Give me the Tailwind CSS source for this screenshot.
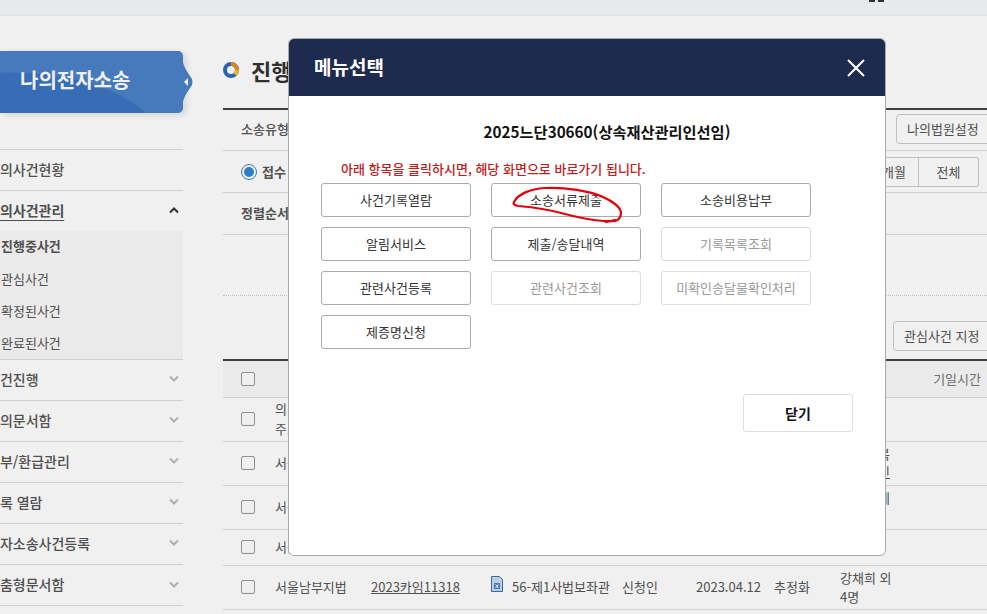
<!doctype html>
<html lang="ko">
<head>
<meta charset="utf-8">
<meta name="viewport" content="width=device-width,initial-scale=1">
<title>나의전자소송</title>
<script src="https://cdn.jsdelivr.net/npm/@tailwindcss/browser@4"></script>
</head>
<body class="bg-white">
<div class="relative w-[987px] h-[614px] overflow-hidden bg-white text-[13px] text-[#555] font-['Noto_Sans_CJK_KR','Noto_Sans',sans-serif]">

  <!-- 상단 바 -->
  <div class="h-[16px] bg-[#f7f8f9] border-b border-[#ececec] flex justify-end items-start overflow-hidden">
    <div class="flex gap-[45px] pr-[14px] text-[12px] leading-[18px] text-[#444]">
      <span class="flex gap-[3px] h-[2px]"><span class="w-[6px] bg-[#333]"></span><span class="w-[6px] bg-[#333]"></span></span>
      <span class="mt-[-15px]">로그아웃</span>
    </div>
  </div>

  <div class="flex">
    <!-- 왼쪽 메뉴 -->
    <aside class="w-[183px] shrink-0 pt-[35px]">
      <div class="relative h-[62px] rounded-r-[5px] bg-[#4c82c8] flex items-center pl-[20px] pb-[4px] text-[20px] font-bold text-white shadow-[3px_2px_6px_rgba(0,0,0,.12)]">
        <svg class="absolute left-0 top-0 rounded-r-[5px]" width="183" height="62" viewBox="0 0 183 62"><path d="M0 22C50 20 110 30 146 62H0Z" fill="#3a74c0"/></svg>
        <span class="relative">나의전자소송</span>
        <svg class="absolute left-[182px] top-[6px]" width="12" height="50" viewBox="0 0 12 50">
          <path d="M0 0C1 9 4 13 10 22Q11 25 10 28C4 37 1 41 0 50Z" fill="#4c82c8"/>
          <path d="M6 21V29L2 25Z" fill="#fff"/>
        </svg>
      </div>

      <ul class="mt-[36px] border-t border-[#ddd] text-[14px] font-medium">
        <li class="h-[41px] flex items-center pb-[2px] border-b border-[#ddd] overflow-hidden"><span class="ml-[-13px] whitespace-nowrap">나의사건현황</span></li>
        <li class="h-[40px] flex items-center justify-between pr-[3px] pb-[2px] overflow-hidden">
          <span class="ml-[-13px] whitespace-nowrap font-bold underline underline-offset-4">나의사건관리</span>
          <svg width="12" height="8" viewBox="0 0 12 8" fill="none" stroke="#333" stroke-width="2"><path d="M2 6.5 6 2.5l4 4"/></svg>
        </li>
        <li class="h-[129px] bg-[#f9f9f9] border-b border-[#ddd] text-[13px] font-normal flex flex-col">
          <a class="h-[32px] flex items-center pl-px pb-[2px] font-bold">진행중사건</a>
          <a class="h-[32px] flex items-center pl-px">관심사건</a>
          <a class="h-[32px] flex items-center pl-px">확정된사건</a>
          <a class="h-[32px] flex items-center pl-px">완료된사건</a>
        </li>
        <li class="h-[41px] flex items-center justify-between pr-[3px] pb-[2px] border-b border-[#ddd] overflow-hidden"><span class="ml-[-13px] whitespace-nowrap">사건진행</span><svg width="12" height="8" viewBox="0 0 12 8" fill="none" stroke="#bbb" stroke-width="2"><path d="m2 1.5 4 4 4-4"/></svg></li>
        <li class="h-[41px] flex items-center justify-between pr-[3px] pb-[2px] border-b border-[#ddd] overflow-hidden"><span class="ml-[-13px] whitespace-nowrap">나의문서함</span><svg width="12" height="8" viewBox="0 0 12 8" fill="none" stroke="#bbb" stroke-width="2"><path d="m2 1.5 4 4 4-4"/></svg></li>
        <li class="h-[41px] flex items-center justify-between pr-[3px] pb-[2px] border-b border-[#ddd] overflow-hidden"><span class="ml-[-13px] whitespace-nowrap">납부/환급관리</span><svg width="12" height="8" viewBox="0 0 12 8" fill="none" stroke="#bbb" stroke-width="2"><path d="m2 1.5 4 4 4-4"/></svg></li>
        <li class="h-[41px] flex items-center justify-between pr-[3px] pb-[2px] border-b border-[#ddd] overflow-hidden"><span class="ml-[-13px] whitespace-nowrap">기록 열람</span><svg width="12" height="8" viewBox="0 0 12 8" fill="none" stroke="#bbb" stroke-width="2"><path d="m2 1.5 4 4 4-4"/></svg></li>
        <li class="h-[41px] flex items-center justify-between pr-[3px] pb-[2px] border-b border-[#ddd] overflow-hidden"><span class="ml-[-13px] whitespace-nowrap">전자소송사건등록</span><svg width="12" height="8" viewBox="0 0 12 8" fill="none" stroke="#bbb" stroke-width="2"><path d="m2 1.5 4 4 4-4"/></svg></li>
        <li class="h-[41px] flex items-center justify-between pr-[3px] pb-[1px] border-b border-[#ddd] overflow-hidden"><span class="ml-[-13px] whitespace-nowrap">맞춤형문서함</span><svg width="12" height="8" viewBox="0 0 12 8" fill="none" stroke="#bbb" stroke-width="2"><path d="m2 1.5 4 4 4-4"/></svg></li>
      </ul>
    </aside>

    <!-- 본문 -->
    <main class="ml-[40px] flex-1 min-w-0">
      <div class="h-[92px] flex items-center gap-[12px] pt-[16px]">
        <svg width="16" height="16" viewBox="0 0 16 16" fill="none" stroke-width="4">
          <circle cx="8" cy="8" r="6" stroke="#2a6db8"/>
          <path d="M8 2a6 6 0 0 1 6 6" stroke="#f08a24"/>
          <path d="M14 8a6 6 0 0 1-2 4.5" stroke="#f3c42c"/>
        </svg>
        <h1 class="text-[22px] font-bold text-[#333]">진행중사건</h1>
      </div>

      <div class="border-t-2 border-[#444]">
        <div class="h-[41px] flex items-center justify-between border-b border-[#ddd] pl-[18px]">
          <span class="font-medium pb-[3px]">소송유형</span>
          <button class="h-[30px] w-[100px] mr-[-9px] mb-[2px] shrink-0 border border-[#ccc] rounded-[4px] text-left pl-[10px] whitespace-nowrap">나의법원설정</button>
        </div>
        <div class="h-[42px] flex items-center justify-between border-b border-[#ddd] pl-[18px] pr-[8px]">
          <span class="flex items-center gap-[5px] font-bold">
            <span class="w-[16px] h-[16px] rounded-full border border-[#3a86c8] flex items-center justify-center"><span class="w-[10px] h-[10px] rounded-full bg-[#2f86d6]"></span></span>
            접수
          </span>
          <div class="flex h-[30px] border border-[#ccc] rounded-[3px]">
            <span class="w-[60px] flex items-center justify-end pr-[12px] border-r border-[#ccc]">1개월</span>
            <span class="w-[59px] flex items-center justify-center">전체</span>
          </div>
        </div>
        <div class="h-[42px] flex items-center border-b border-[#ddd] pl-[18px] pb-[2px] font-bold">정렬순서</div>
      </div>

      <div class="h-[61px] border-b border-dotted border-[#ccc]"></div>

      <div class="h-[64px] flex items-start justify-end pt-[25px] overflow-visible">
        <button class="h-[30px] w-[100px] mr-[-6px] shrink-0 border border-[#ccc] rounded-[4px] text-left pl-[10px] whitespace-nowrap">관심사건 지정</button>
      </div>

      <div class="border-t-2 border-[#444] mt-[-1px]">
        <div class="h-[37px] bg-[#f9f9f9] border-b border-[#ddd] flex items-center justify-between pl-[18px] pr-[6px]">
          <span class="w-[14px] h-[14px] border border-[#999] rounded-[2px] bg-white"></span>
          <span class="text-[#777]">기일시간</span>
        </div>
        <div class="h-[44px] pb-[2px] border-b border-[#ddd] grid grid-cols-[34px_96px_120px_131px_74px_78px_66px_1fr] items-center pl-[18px]">
          <span class="w-[14px] h-[14px] border border-[#999] rounded-[2px]"></span>
          <span class="leading-[20px]">의정부<br>주소</span>
        </div>
        <div class="h-[44px] pb-[2px] border-b border-[#ddd] grid grid-cols-[34px_96px_120px_131px_74px_78px_66px_1fr] items-center pl-[18px]">
          <span class="w-[14px] h-[14px] border border-[#999] rounded-[2px]"></span>
          <span>서울</span><span></span><span></span><span></span><span></span><span></span>
          <span class="w-[50px] text-right leading-[18px] whitespace-nowrap">강지복<br><u>외 1인</u></span>
        </div>
        <div class="h-[44px] pb-[2px] border-b border-[#ddd] grid grid-cols-[34px_96px_120px_131px_74px_78px_66px_1fr] items-center pl-[18px]">
          <span class="w-[14px] h-[14px] border border-[#999] rounded-[2px]"></span>
          <span>서울</span><span></span><span></span><span></span><span></span><span></span>
          <span class="w-[50px] text-right leading-[18px] whitespace-nowrap pb-[18px]">강지에</span>
        </div>
        <div class="h-[36px] pb-[2px] border-b border-[#ddd] grid grid-cols-[34px_96px_120px_131px_74px_78px_66px_1fr] items-center pl-[18px]">
          <span class="w-[14px] h-[14px] border border-[#999] rounded-[2px]"></span>
          <span>서울</span>
        </div>
        <div class="h-[44px] pb-[2px] border-b border-[#ddd] grid grid-cols-[34px_96px_120px_131px_74px_78px_66px_1fr] items-center pl-[18px] whitespace-nowrap">
          <span class="w-[14px] h-[14px] border border-[#999] rounded-[2px]"></span>
          <span>서울남부지법</span>
          <u>2023카임11318</u>
          <span class="flex items-center gap-[9px]">
            <svg class="mb-[5px]" width="12" height="16" viewBox="0 0 12 16"><path d="M.5.5h8l3 3v12H.5z" fill="#c9daf2" stroke="#3d6fb0"/><path d="M3 7h6v6H3z" fill="#4a7fc4"/><path d="M4.5 8.5 7.5 12M7.5 8.5 4.5 12" stroke="#fff"/></svg>
            56-제1사법보좌관
          </span>
          <span>신청인</span>
          <span>2023.04.12</span>
          <span>추정화</span>
          <span class="leading-[19px] whitespace-normal">강채희 외<br>4명</span>
        </div>
      </div>
    </main>
  </div>

  <!-- 딤 처리 -->
  <div class="absolute inset-0 bg-black/[0.06]"></div>

  <!-- 메뉴선택 모달 -->
  <div class="absolute left-[288px] top-[38px] w-[598px] h-[518px] bg-white border border-[#aaa] rounded-[6px] overflow-hidden">
    <div class="h-[57px] bg-[#1e2b4e] flex items-center justify-between pl-[25px] pr-[20px]">
      <h2 class="text-[19px] font-bold text-white">메뉴선택</h2>
      <svg width="18" height="18" viewBox="0 0 18 18" stroke="#fff" stroke-width="2"><path d="M1 1l16 16M17 1 1 17"/></svg>
    </div>
    <div class="relative pl-[32px]">
      <p class="pt-[23px] pl-[8px] text-center text-[15.25px] font-bold text-[#111] leading-[24px]">2025느단30660(상속재산관리인선임)</p>
      <p class="mt-[16px] pl-[20px] text-[13px] font-medium text-[#c0201c] leading-[20px]">아래 항목을 클릭하시면, 해당 화면으로 바로가기 됩니다.</p>
      <div class="mt-[4px] grid grid-cols-[150px_150px_150px] auto-rows-[34px] gap-x-[20px] gap-y-[10px] text-[13px]">
        <button class="border border-[#aaa] rounded-[3px] text-[#333]">사건기록열람</button>
        <button class="border border-[#aaa] rounded-[3px] text-[#333]">소송서류제출</button>
        <button class="border border-[#aaa] rounded-[3px] text-[#333]">소송비용납부</button>
        <button class="border border-[#aaa] rounded-[3px] text-[#333]">알림서비스</button>
        <button class="border border-[#aaa] rounded-[3px] text-[#333]">제출/송달내역</button>
        <button class="border border-[#ddd] rounded-[3px] text-[#999]">기록목록조회</button>
        <button class="border border-[#aaa] rounded-[3px] text-[#333]">관련사건등록</button>
        <button class="border border-[#ddd] rounded-[3px] text-[#999]">관련사건조회</button>
        <button class="border border-[#ddd] rounded-[3px] text-[#999]">미확인송달물확인처리</button>
        <button class="border border-[#aaa] rounded-[3px] text-[#333]">제증명신청</button>
      </div>
      <div class="flex justify-end pr-[32px] mt-[45px]">
        <button class="w-[110px] h-[38px] border border-[#ddd] rounded-[3px] text-[14px] font-bold text-[#111]">닫기</button>
      </div>
    </div>
  </div>

  <!-- 빨간 펜 표시 -->
  <svg class="absolute left-0 top-0 pointer-events-none" width="987" height="614" fill="none" stroke="#e3000f" stroke-width="2.25" stroke-linejoin="round" stroke-linecap="round">
    <path d="M514 202C518 194 530 189 545 188 565 187 590 191 603 197 612 201 620 207 621 212 621 217 619 220 615 221 604 222 585 219 565 214 548 209 530 207 518 206 514 205 513 204 514 202Z"/>
    <path d="M606 222 615 220"/>
  </svg>
</div>
</body>
</html>
